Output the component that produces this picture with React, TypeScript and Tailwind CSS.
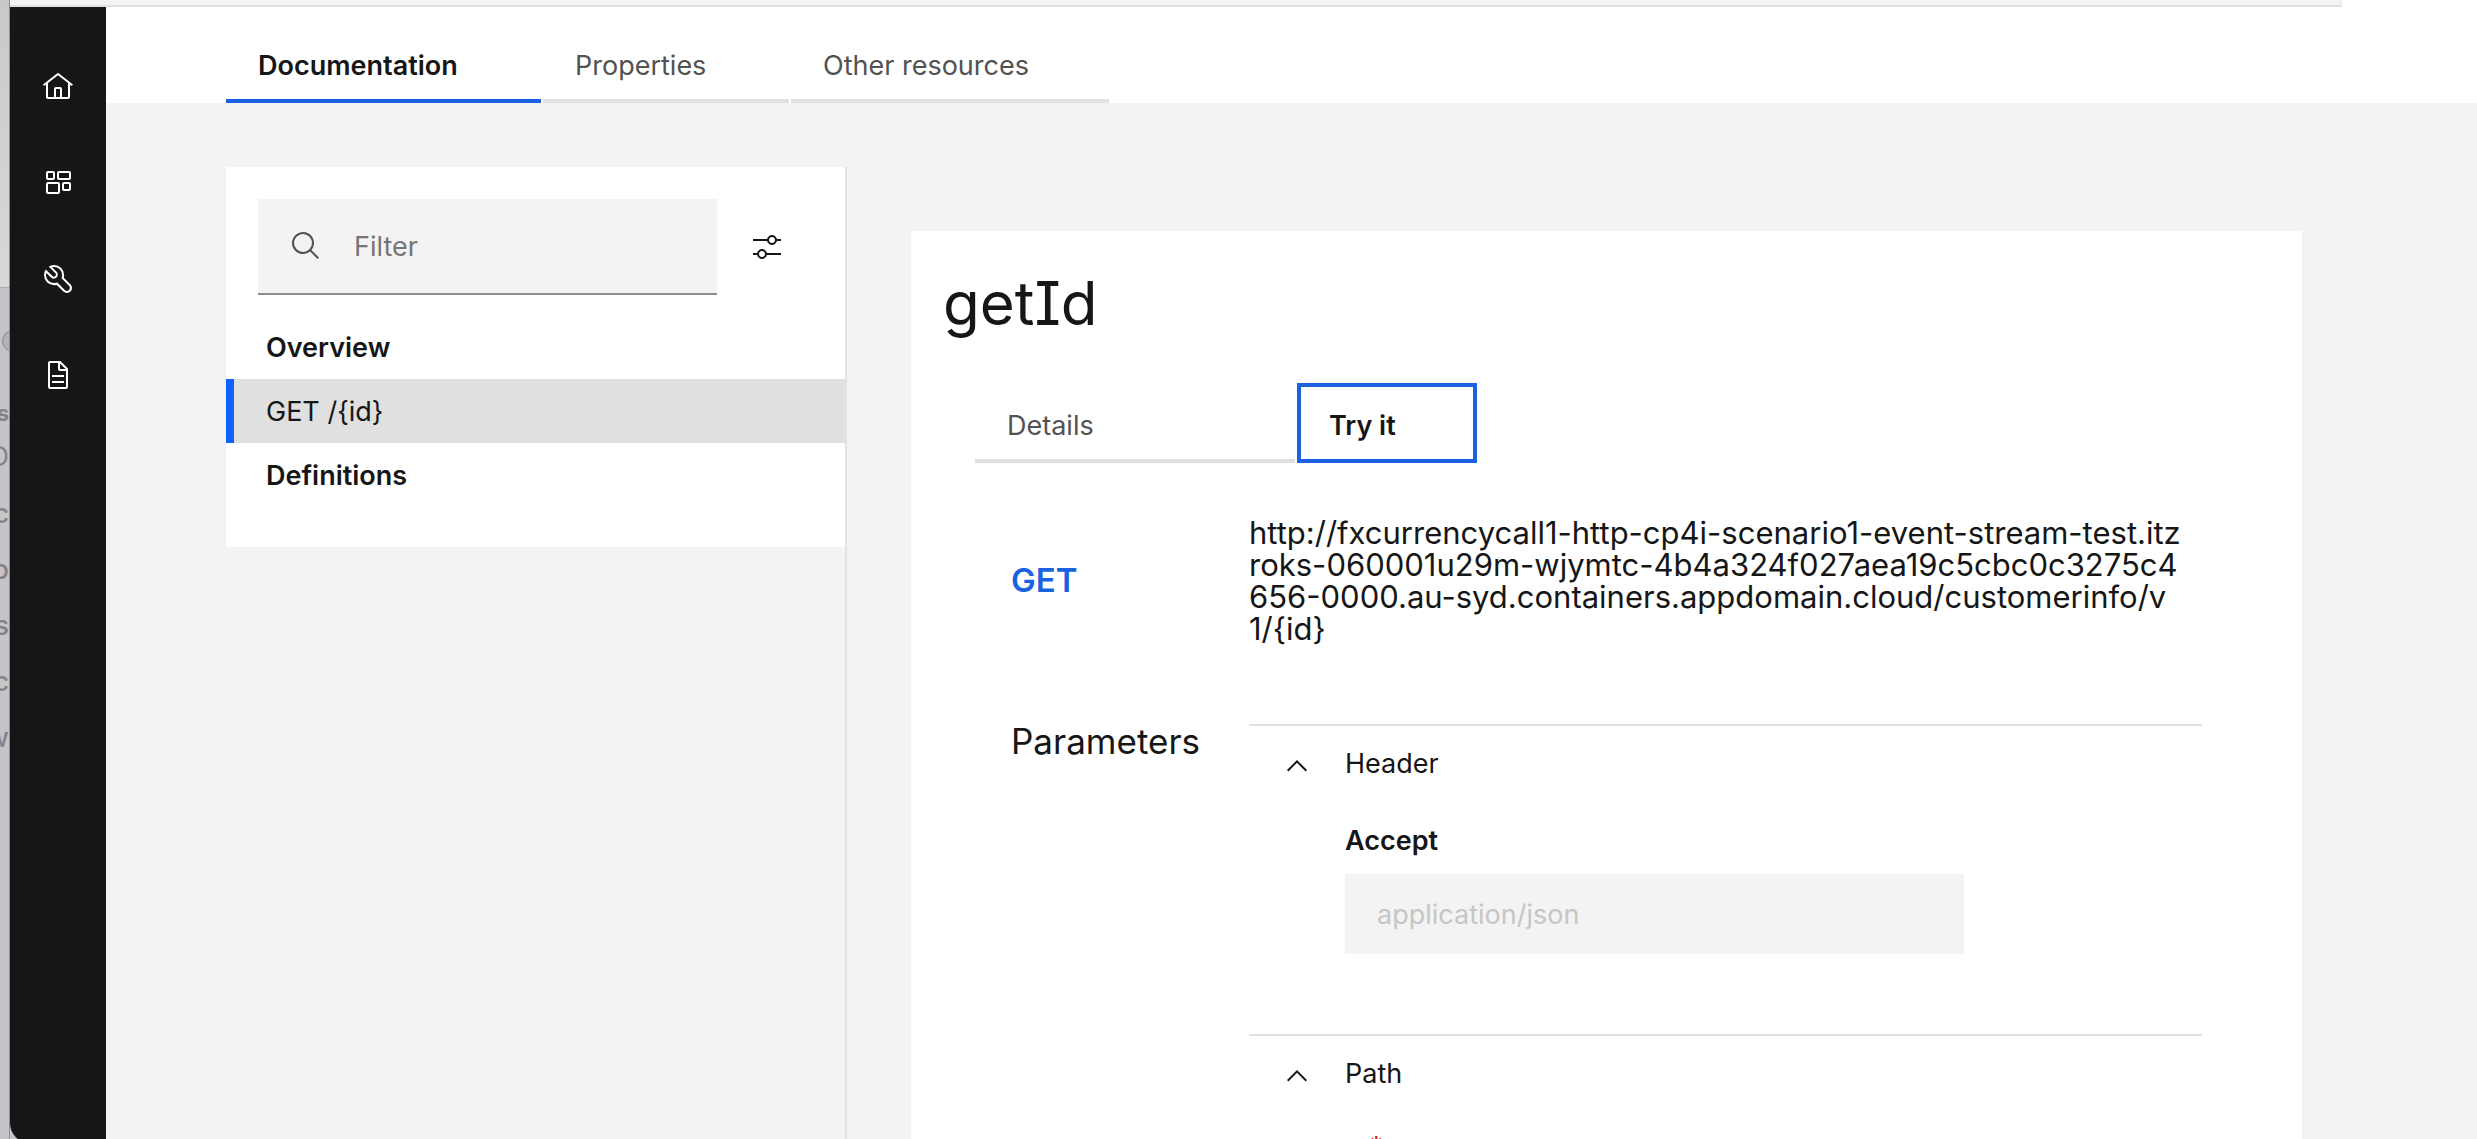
import React, { useState } from 'react';

type IconProps = { className?: string };

function HomeIcon({ className = 'size-8' }: IconProps) {
  return (
    <svg viewBox="0 0 32 32" fill="currentColor" className={className} aria-hidden="true">
      <path d="M16.6123,2.2138a1.01,1.01,0,0,0-1.2427,0L1,13.4194l1.2427,1.5717L4,13.6208V26a2.0041,2.0041,0,0,0,2,2H26a2.0037,2.0037,0,0,0,2-2V13.63L29.7573,15,31,13.4282ZM18,26H14V18h4Zm2,0V18a2.0023,2.0023,0,0,0-2-2H14a2.002,2.002,0,0,0-2,2v8H6V12.0615l10-7.79,10,7.8005V26Z" />
    </svg>
  );
}

function DashboardIcon({ className = 'size-8' }: IconProps) {
  return (
    <svg viewBox="0 0 32 32" fill="none" stroke="currentColor" strokeWidth="2" className={className} aria-hidden="true">
      <rect x="5" y="5" width="7" height="7" rx="1" />
      <rect x="16" y="5" width="12" height="7" rx="1" />
      <rect x="5" y="16" width="12" height="10" rx="1" />
      <rect x="21" y="16" width="7" height="7" rx="1" />
    </svg>
  );
}

function ToolsIcon({ className = 'size-8' }: IconProps) {
  return (
    <svg viewBox="0 0 32 32" fill="currentColor" className={className} aria-hidden="true">
      <path d="M12.1,2A9.8,9.8,0,0,0,6.7,3.6L13.1,10a2.1,2.1,0,0,1,.2,3,2.1,2.1,0,0,1-3-.2L3.7,6.4A9.84,9.84,0,0,0,2,12.1,10.14,10.14,0,0,0,12.1,22.2a10.9,10.9,0,0,0,2.6-.3l6.7,6.7a5,5,0,0,0,7.1-7.1l-6.7-6.7a10.9,10.9,0,0,0,.3-2.6A10,10,0,0,0,12.1,2Zm8,10.1a7.61,7.61,0,0,1-.3,2.1l-.3,1.1.8.8,6.7,6.7a2.88,2.88,0,0,1,.9,2.1A2.72,2.72,0,0,1,27,27a2.9,2.9,0,0,1-4.2,0l-6.7-6.7-.8-.8-1.1.3a7.61,7.61,0,0,1-2.1.3,8.27,8.27,0,0,1-5.7-2.3A7.63,7.63,0,0,1,4,12.1a8.33,8.33,0,0,1,.3-2.2l4.4,4.4a4.14,4.14,0,0,0,5.9.2,4.14,4.14,0,0,0-.2-5.9L10,4.2a6.45,6.45,0,0,1,2-.3,8.27,8.27,0,0,1,5.7,2.3A8.49,8.49,0,0,1,20.1,12.1Z" />
    </svg>
  );
}

function DocumentIcon({ className = 'size-8' }: IconProps) {
  return (
    <svg viewBox="0 0 32 32" fill="currentColor" className={className} aria-hidden="true">
      <path d="M25.7,9.3l-7-7C18.5,2.1,18.3,2,18,2H8C6.9,2,6,2.9,6,4v24c0,1.1,0.9,2,2,2h16c1.1,0,2-0.9,2-2V10C26,9.7,25.9,9.5,25.7,9.3z M18,4.4l5.6,5.6H18V4.4z M24,28H8V4h8v6c0,1.1,0.9,2,2,2h6V28z" />
      <rect x="10" y="22" width="12" height="2" />
      <rect x="10" y="16" width="12" height="2" />
    </svg>
  );
}

function SearchIcon({ className = 'size-8' }: IconProps) {
  return (
    <svg viewBox="0 0 32 32" fill="currentColor" className={className} aria-hidden="true">
      <path d="M29,27.5859l-7.5521-7.5521a11.0177,11.0177,0,1,0-1.4141,1.4141L27.5859,29ZM4,13a9,9,0,1,1,9,9A9.01,9.01,0,0,1,4,13Z" />
    </svg>
  );
}

function AdjustIcon({ className = 'size-8' }: IconProps) {
  return (
    <svg viewBox="0 0 32 32" fill="currentColor" className={className} aria-hidden="true">
      <path d="M30,8h-4.1c-0.5-2.3-2.5-4-4.9-4s-4.4,1.7-4.9,4H2v2h14.1c0.5,2.3,2.5,4,4.9,4s4.4-1.7,4.9-4H30V8z M21,12c-1.7,0-3-1.3-3-3s1.3-3,3-3s3,1.3,3,3S22.7,12,21,12z" />
      <path d="M2,24h4.1c0.5,2.3,2.5,4,4.9,4s4.4-1.7,4.9-4H30v-2H15.9c-0.5-2.3-2.5-4-4.9-4s-4.4,1.7-4.9,4H2V24z M11,20c1.7,0,3,1.3,3,3s-1.3,3-3,3s-3-1.3-3-3S9.3,20,11,20z" />
    </svg>
  );
}

function ChevronUpIcon({ className = 'size-8' }: IconProps) {
  return (
    <svg viewBox="0 0 16 16" fill="currentColor" className={className} aria-hidden="true">
      <path d="M8 5 13 10 12.3 10.7 8 6.4 3.7 10.7 3 10z" />
    </svg>
  );
}

const navItems = [
  { label: 'Home', Icon: HomeIcon },
  { label: 'Dashboard', Icon: DashboardIcon },
  { label: 'Tools', Icon: ToolsIcon },
  { label: 'Documents', Icon: DocumentIcon },
];

const pageTabs = [
  { label: 'Documentation', width: 'w-[315px]' },
  { label: 'Properties', width: 'w-[246px]' },
  { label: 'Other resources', width: 'w-[318px]' },
];

const urlLines = [
  'http://fxcurrencycall1-http-cp4i-scenario1-event-stream-test.itz',
  'roks-060001u29m-wjymtc-4b4a324f027aea19c5cbc0c3275c4',
  '656-0000.au-syd.containers.appdomain.cloud/customerinfo/v',
  '1/{id}',
];

/* The sliver of the window that sits behind the application. */
function BackWindow() {
  return (
    <div aria-hidden="true" className="flex w-[10px] shrink-0 flex-col overflow-hidden border-r border-[#8d8c90] bg-[#c6c4c9] text-[#858389]">
      <div className="h-[288px] shrink-0 border-b border-[#a9a8ac] bg-linear-to-b from-[#c9c9c9] to-[#d8d8d8]" />
      <div className="mt-[42px] mb-[46px] ml-[2px] size-[22px] shrink-0 rounded-full border border-[#8c8a90] bg-[#b4b2b8]" />
      <div className="flex h-[30px] shrink-0 items-center justify-end text-[22px] font-bold">es</div>
      <div className="flex h-[58px] shrink-0 items-center justify-end text-[27px]">D</div>
      {['c', 'p', 's', 'c', 'w'].map((letter, i) => (
        <div key={i} className="flex h-14 shrink-0 items-center justify-end text-[27px] font-medium">
          {letter}
        </div>
      ))}
    </div>
  );
}

function Section({ title, children }: { title: string; children: React.ReactNode }) {
  const [open, setOpen] = useState(true);
  return (
    <section className="border-t-2 border-[#e0e0e0]">
      <button type="button" aria-expanded={open} onClick={() => setOpen(!open)} className="flex h-[76px] w-full items-center gap-8 pl-8 text-left text-[27px]">
        <ChevronUpIcon className="mt-1 size-8" />
        {title}
      </button>
      {open && <div className="pt-[21px] pb-20 pl-24">{children}</div>}
    </section>
  );
}

export default function App() {
  const [tab, setTab] = useState('Documentation');
  return (
    <div className="flex h-screen overflow-hidden bg-[#c6c4c9] font-['Inter','Liberation_Sans',sans-serif] text-[#161616]">
      <BackWindow />
      <div className="flex min-w-0 flex-1 flex-col">
        <div className="flex shrink-0 bg-white">
          <div className="h-[7px] flex-1 border-b-2 border-[#e0e0e0] bg-[#f3f3f3]" />
          <div className="w-[135px]" />
        </div>
        <div className="flex min-h-0 flex-1">
          <nav aria-label="Main" className="-mb-1 flex w-24 shrink-0 flex-col rounded-bl-[20px] bg-[#161616] pt-8 text-white">
            {navItems.map(({ label, Icon }) => (
              <a key={label} href="#" aria-label={label} className="flex h-24 items-center justify-center">
                <Icon />
              </a>
            ))}
          </nav>

          <div className="flex min-w-0 flex-1 flex-col bg-[#f3f3f3]">
            <header className="flex h-24 shrink-0 items-end bg-white pl-[120px]">
              <div role="tablist" className="flex gap-[2px]">
                {pageTabs.map(({ label, width }) => (
                  <button
                    key={label}
                    type="button"
                    role="tab"
                    aria-selected={tab === label}
                    onClick={() => setTab(label)}
                    className={`${width} h-20 border-b-4 pt-[10px] pl-8 text-left text-[27px] whitespace-nowrap ${
                      tab === label ? 'border-[#1b62e0] font-semibold text-[#161616]' : 'border-[#e0e0e0] text-[#525252]'
                    }`}
                  >
                    {label}
                  </button>
                ))}
              </div>
            </header>

            <div className="flex min-h-0 flex-1 pt-16 pr-[175px] pl-[120px]">
              <aside className="w-[621px] shrink-0 border-r-2 border-[#e3e3e3]">
                <div className="bg-white pt-8 pb-10">
                  <div className="flex items-center pr-7 pl-8">
                    <label className="flex h-24 min-w-0 flex-1 items-center gap-8 border-b-2 border-[#8d8d8d] bg-[#f3f3f3] px-8 text-[#525252]">
                      <SearchIcon className="size-8 shrink-0" />
                      <input type="text" aria-label="Filter" placeholder="Filter" className="w-full min-w-0 bg-transparent pt-[2px] text-[27px] outline-none placeholder:text-[#757575]" />
                    </label>
                    <button type="button" aria-label="Filter settings" className="flex h-24 w-[100px] shrink-0 items-center justify-center">
                      <AdjustIcon />
                    </button>
                  </div>
                  <nav aria-label="API" className="flex flex-col pt-5 text-[27px]">
                    <a href="#overview" className="flex h-16 items-center border-l-8 border-transparent pt-[2px] pl-8 font-semibold">Overview</a>
                    <a href="#get" aria-current="page" className="flex h-16 items-center border-l-8 border-[#0f62fe] bg-[#e0e0e0] pt-[2px] pl-8">GET /{'{id}'}</a>
                    <a href="#definitions" className="flex h-16 items-center border-l-8 border-transparent pt-[2px] pl-8 font-semibold">Definitions</a>
                  </nav>
                </div>
              </aside>

              <main className="mt-16 ml-16 min-w-0 flex-1 bg-white pt-8">
                <h1 className="pl-8 text-[60px] leading-20 [font-feature-settings:'cv08']">getId</h1>
                <div role="tablist" className="mt-10 flex gap-[2px] pl-16">
                  <button type="button" role="tab" aria-selected="false" className="h-20 w-[320px] border-b-4 border-[#e0e0e0] pt-[10px] pl-8 text-left text-[27px] text-[#525252]">
                    Details
                  </button>
                  <button type="button" role="tab" aria-selected="true" className="h-20 w-[180px] border-4 border-[#1b62e0] pt-[6px] pl-7 text-left text-[27px] font-semibold">
                    Try it
                  </button>
                </div>

                <div className="mt-[54px] grid grid-cols-[238px_minmax(0,1fr)] pr-[100px] pl-[100px]">
                  <div className="flex items-center text-[33px] font-semibold text-[#1b62e0]">GET</div>
                  <p className="text-[31px] leading-8">
                    {urlLines.map((line) => (
                      <span key={line} className="block whitespace-nowrap">{line}</span>
                    ))}
                  </p>
                  <h2 className="mt-[78px] text-[35px] leading-9">Parameters</h2>
                  <div className="mt-[79px]">
                    <Section title="Header">
                      <label htmlFor="accept" className="block text-[27px] leading-9 font-semibold">Accept</label>
                      <input id="accept" type="text" disabled defaultValue="application/json" className="mt-[15px] block h-20 w-[619px] bg-[#f3f3f3] px-8 text-[27px] text-[#c6c6c6]" />
                    </Section>
                    <Section title="Path">
                      <label htmlFor="path-id" className="flex items-start text-[27px] leading-9 font-semibold">
                        id<span className="leading-7 text-[#da1e28]">*</span>
                      </label>
                      <input id="path-id" type="text" className="mt-[15px] block h-20 w-[619px] bg-[#f3f3f3] px-8 text-[27px]" />
                    </Section>
                  </div>
                </div>
              </main>
            </div>
          </div>
        </div>
      </div>
    </div>
  );
}
